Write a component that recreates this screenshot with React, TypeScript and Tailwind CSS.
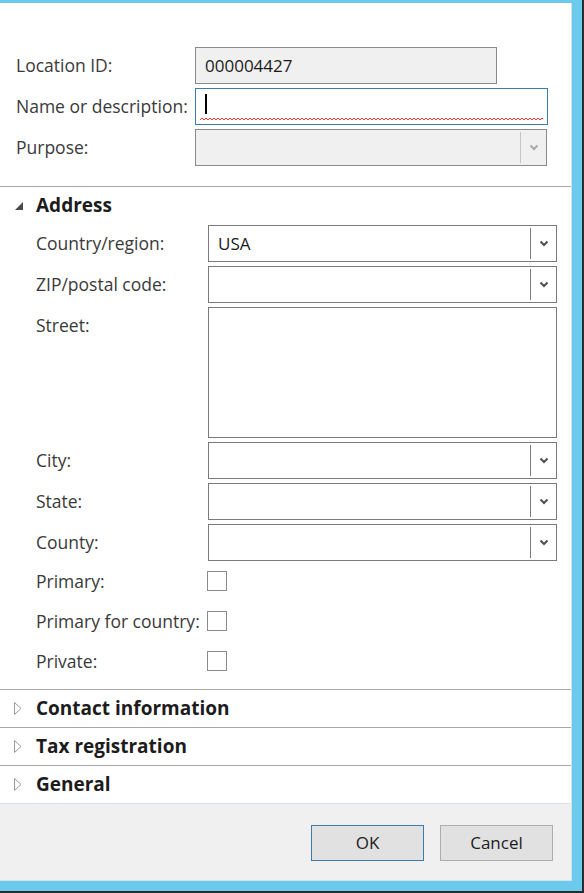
import React from "react";

const font = { fontFamily: '"Open Sans", "Noto Sans", sans-serif' };

function Chevron({ light }: { light?: boolean }) {
  return (
    <svg width="10" height="7" viewBox="0 0 10 7" className="block">
      <path
        d="M1.5 1.5 L5 5 L8.5 1.5"
        fill="none"
        stroke={light ? "#a8a8a8" : "#505050"}
        strokeWidth="2"
      />
    </svg>
  );
}

function Combo({ value, disabled, width }: { value?: string; disabled?: boolean; width: string }) {
  return (
    <div
      className={`${width} h-full flex items-stretch border ${
        disabled ? "bg-[#f0f0f0] border-[#8a8a8a]" : "bg-white border-[#7a7a7a]"
      }`}
    >
      <div className="flex-1 flex items-center pl-[9px] text-[17px] text-[#1a1a1a]">{value}</div>
      <div className="flex items-stretch py-[2px]">
        <div className={`w-px ${disabled ? "bg-[#c4c4c4]" : "bg-[#7a7a7a]"}`} />
      </div>
      <div className="w-[25px] flex items-center justify-center">
        <Chevron light={disabled} />
      </div>
    </div>
  );
}

function Row({ label, children, h = "h-[37px]" }: { label: string; children: React.ReactNode; h?: string }) {
  return (
    <div className={`flex ${h}`}>
      <div className="w-[172px] pt-[5px] text-[17.5px] text-[#3a3a3a] whitespace-nowrap">{label}</div>
      {children}
    </div>
  );
}

function CheckRow({ label }: { label: string }) {
  return (
    <div className="flex h-[40px] items-center">
      <div className="w-[171px] text-[17.5px] text-[#3a3a3a] whitespace-nowrap">{label}</div>
      <div className="w-[20px] h-[20px] border border-[#8a8a8a] bg-white" />
    </div>
  );
}

function Collapsed({ title, last }: { title: string; last?: boolean }) {
  return (
    <div
      className={`h-[38px] flex items-center border-b ${last ? "border-[#dbe3ea]" : "border-[#a9a9a9]"}`}
    >
      <div className="w-[36px] pl-[14px] flex items-center">
        <svg width="8" height="13" viewBox="0 0 8 13">
          <polygon points="0.5,0.5 7,6.5 0.5,12.5" fill="none" stroke="#9a9a9a" strokeWidth="1" />
        </svg>
      </div>
      <span className="text-[19px] font-bold text-[#1c1c1c]">{title}</span>
    </div>
  );
}

export default function App() {
  return (
    <div className="w-[584px] h-[893px] bg-[#262c30] pr-[2px] pb-[2px]" style={font}>
      <div className="h-full bg-[#6ccbec] pt-[3px] pr-[10px] pb-[10px] flex flex-col">
        <div className="flex-1 bg-white border-r border-b border-[#cfe3ea] flex flex-col">
          {/* header fields */}
          <div className="pt-[44px] pb-[20px] pl-[16px] flex flex-col gap-[4px] border-b border-[#a9a9a9]">
            <div className="flex h-[37px]">
              <div className="w-[179px] pt-[5px] text-[17.5px] text-[#3a3a3a]">Location ID:</div>
              <div className="w-[302px] border border-[#8a8a8a] bg-[#f0f0f0] flex items-center pl-[9px] text-[17px] text-[#1a1a1a]">
                000004427
              </div>
            </div>
            <div className="flex h-[37px]">
              <div className="w-[179px] pt-[5px] text-[17.5px] text-[#3a3a3a] whitespace-nowrap">Name or description:</div>
              <div className="relative w-[353px] border border-[#3d7bad] bg-white">
                <div className="absolute left-[9px] top-[5px] w-[2px] h-[20px] bg-black" />
                <svg className="absolute left-[4px] bottom-[3px]" width="343" height="4">
                  <defs>
                    <pattern id="sq" width="4" height="4" patternUnits="userSpaceOnUse">
                      <path d="M0 3 L2 1 L4 3" fill="none" stroke="#f03030" strokeWidth="1" />
                    </pattern>
                  </defs>
                  <rect width="343" height="4" fill="url(#sq)" />
                </svg>
              </div>
            </div>
            <div className="flex h-[37px]">
              <div className="w-[179px] pt-[5px] text-[17.5px] text-[#3a3a3a]">Purpose:</div>
              <Combo disabled width="w-[352px]" />
            </div>
          </div>

          {/* address */}
          <div className="pb-[8px] border-b border-[#a9a9a9]">
            <div className="h-[37px] flex items-center">
              <div className="w-[36px] pl-[15px] flex items-center">
                <svg width="8" height="8" viewBox="0 0 8 8">
                  <polygon points="8,0 8,8 0,8" fill="#4a4a4a" />
                </svg>
              </div>
              <span className="text-[19px] font-bold text-[#1c1c1c]">Address</span>
            </div>
            <div className="pl-[36px] pt-[1px] flex flex-col gap-[4px]">
              <Row label="Country/region:">
                <Combo value="USA" width="w-[349px]" />
              </Row>
              <Row label="ZIP/postal code:">
                <Combo width="w-[349px]" />
              </Row>
              <Row label="Street:" h="h-[131px]">
                <div className="w-[349px] h-full border border-[#7a7a7a] bg-white" />
              </Row>
              <Row label="City:">
                <Combo width="w-[349px]" />
              </Row>
              <Row label="State:">
                <Combo width="w-[349px]" />
              </Row>
              <Row label="County:">
                <Combo width="w-[349px]" />
              </Row>
            </div>
            <div className="pl-[36px]">
              <CheckRow label="Primary:" />
              <CheckRow label="Primary for country:" />
              <CheckRow label="Private:" />
            </div>
          </div>

          <Collapsed title="Contact information" />
          <Collapsed title="Tax registration" />
          <Collapsed title="General" last />

          {/* footer */}
          <div className="flex-1 bg-[#f0f0f0] flex justify-end items-start pt-[21px] pr-[18px] gap-[16px]">
            <button className="w-[113px] h-[36px] bg-[#e1e1e1] border border-[#3d7bad] text-[17px] text-[#1c1c1c]">
              OK
            </button>
            <button className="w-[113px] h-[36px] bg-[#e1e1e1] border border-[#adadad] text-[17px] text-[#1c1c1c]">
              Cancel
            </button>
          </div>
        </div>
      </div>
    </div>
  );
}
